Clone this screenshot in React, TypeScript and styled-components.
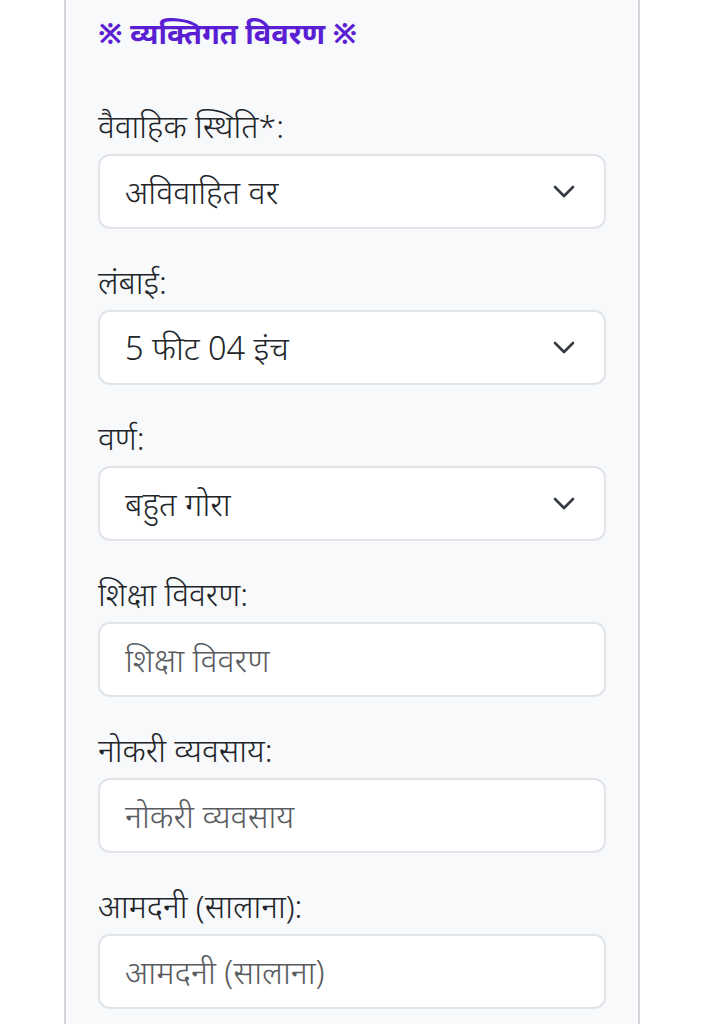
import React from 'react'
import styled, { createGlobalStyle } from 'styled-components'

const GlobalStyle = createGlobalStyle`
  html, body {
    margin: 0;
    padding: 0;
    background: #ffffff;
  }
  body {
    font-family: "Noto Sans", "Noto Sans Devanagari", Roboto, sans-serif;
    color: #212529;
  }
`

const Page = styled.div`
  width: 704px;
  height: 1024px;
  overflow: hidden;
  background: #ffffff;
`

const Panel = styled.div`
  margin-left: 64px;
  width: 576px;
  min-height: 1024px;
  box-sizing: border-box;
  padding: 16px 32px 0;
  background: #f8f9fa;
  border-left: 2px solid #d3d5d8;
  border-right: 2px solid #d3d5d8;
`

const Title = styled.h5`
  margin: 0 0 53px;
  font-size: 29px;
  line-height: 34px;
  font-weight: 700;
  color: #5b1fd3;
`

const Group = styled.div`
  margin-bottom: 30px;
`

const Label = styled.label`
  display: block;
  margin-bottom: 5px;
  font-size: 32px;
  line-height: 46px;
  font-weight: 350;
  color: #212529;
`

const Field = styled.div`
  position: relative;
  display: flex;
  align-items: center;
  width: 508px;
  height: 75px;
  box-sizing: border-box;
  padding: 0 60px 0 25px;
  background: #ffffff;
  border: 2px solid #e1e4e8;
  border-radius: 12px;
  font-size: 32.5px;
  font-weight: 350;
`

const Value = styled.span<{ $placeholder?: boolean }>`
  color: ${({ $placeholder }) => ($placeholder ? '#595c61' : '#212529')};
  white-space: nowrap;
`

const Chevron = styled.svg`
  position: absolute;
  right: 29px;
  top: 50%;
  margin-top: -7px;
  width: 22px;
  height: 13px;
`

const ChevronIcon = () => (
  <Chevron viewBox="0 0 22 13" fill="none">
    <path d="M2 2l9 9 9-9" stroke="#343a40" strokeWidth="2.6" strokeLinecap="round" strokeLinejoin="round" />
  </Chevron>
)

const fields: { label: string; value: string; select?: boolean; placeholder?: boolean }[] = [
  { label: 'वैवाहिक स्थिति*:', value: 'अविवाहित वर', select: true },
  { label: 'लंबाई:', value: '5 फीट 04 इंच', select: true },
  { label: 'वर्ण:', value: 'बहुत गोरा', select: true },
  { label: 'शिक्षा विवरण:', value: 'शिक्षा विवरण', placeholder: true },
  { label: 'नोकरी व्यवसाय:', value: 'नोकरी व्यवसाय', placeholder: true },
  { label: 'आमदनी (सालाना):', value: 'आमदनी (सालाना)', placeholder: true },
]

const App: React.FC = () => {
  return (
    <Page>
      <GlobalStyle />
      <Panel>
        <Title>※ व्यक्तिगत विवरण ※</Title>
        {fields.map((f) => (
          <Group key={f.label}>
            <Label>{f.label}</Label>
            <Field>
              <Value $placeholder={f.placeholder}>{f.value}</Value>
              {f.select && <ChevronIcon />}
            </Field>
          </Group>
        ))}
      </Panel>
    </Page>
  )
}

export default App
